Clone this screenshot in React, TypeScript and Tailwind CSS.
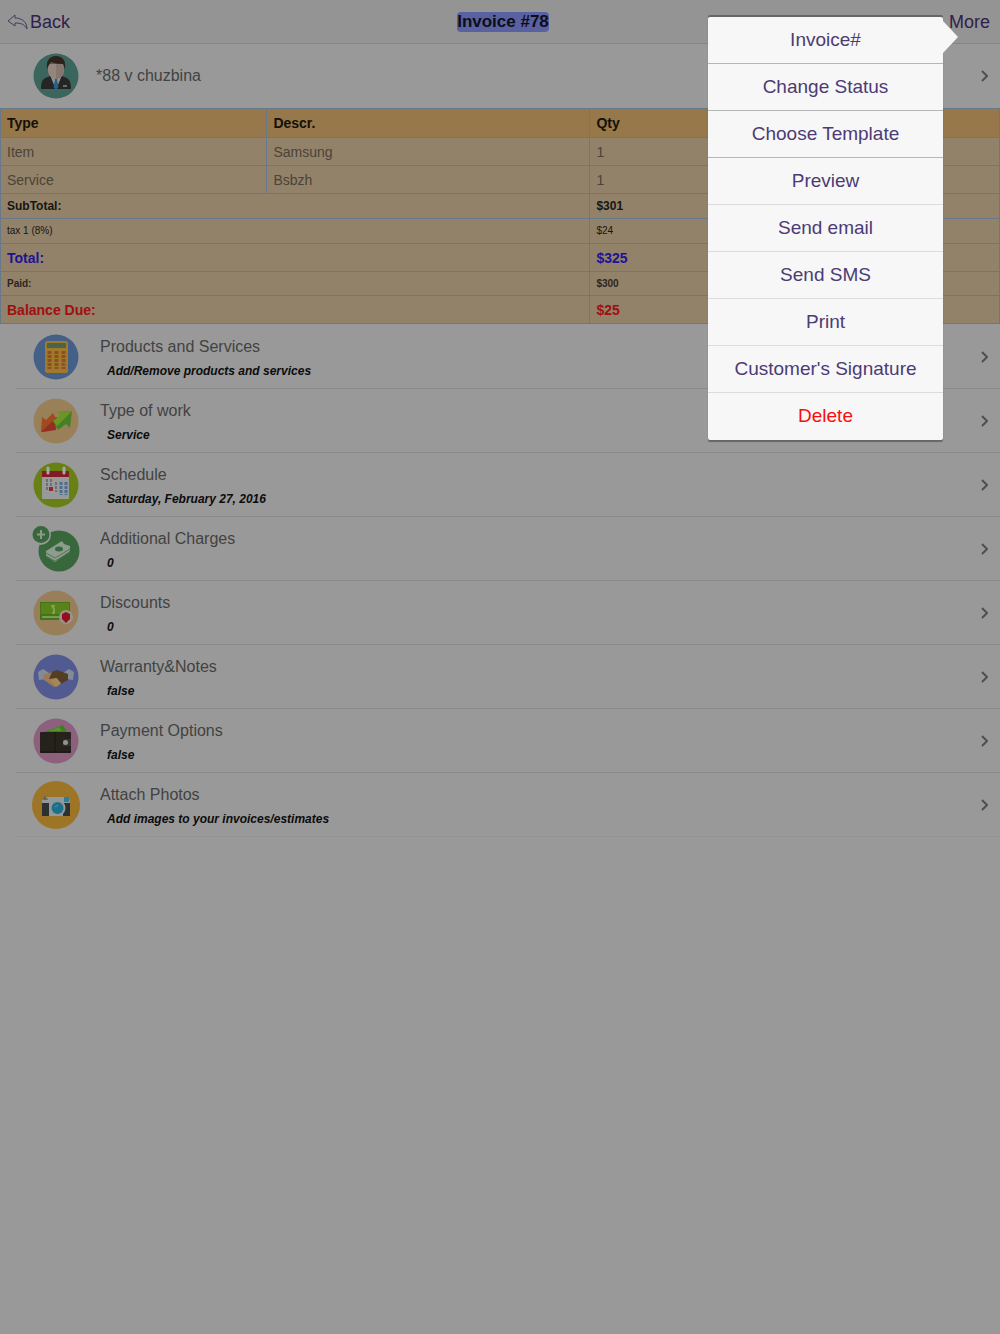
import * as React from "react";
import { useState } from "react";

type Section = {
  title: string;
  detail: string;
  icon: React.ReactNode;
};

const Disc = ({ fill, r = 22.5 }: { fill: string; r?: number }) => (
  <circle cx="24" cy="24" r={r} fill={fill} />
);

function Icon({ children }: { children: React.ReactNode }) {
  return (
    <svg className="h-12 w-12 shrink-0" viewBox="0 0 48 48" aria-hidden="true">
      {children}
    </svg>
  );
}

function CustomerIcon() {
  return (
    <Icon>
      <Disc fill="#3b665d" />
      <path d="M9 37c0-8 2-11 7-12l4-2h8l4 2c5 1 7 4 7 12z" fill="#252526" />
      <path d="M18 23l6 15 6-15z" fill="#8f9295" />
      <path d="M22.5 25h3l-.5 3 1.5 7-2.5 3-2.5-3 1.5-7z" fill="#23608a" />
      <path d="M16 12h16v7c0 4-4 8-8 8s-8-4-8-8z" fill="#94857d" />
      <path d="M24 12h8v7c0 4-4 8-8 8z" fill="#85766f" />
      <path d="M15 17c-1-8 2-13 9-13s10 5 9 13l-2-5c-5 0-9-1-12-2l-2 3z" fill="#2d2219" />
      <path d="M31 34h4" stroke="#858585" strokeWidth="1.5" />
    </Icon>
  );
}

function ProductsIcon() {
  return (
    <Icon>
      <Disc fill="#456086" />
      <rect x="13" y="8" width="23" height="32" rx="2" fill="#a07a2b" />
      <rect x="15" y="10" width="19" height="5" fill="#4c6349" />
      <path d="M17.5 18v18M24.5 18v18M31.5 18v18" stroke="#8f4d25" strokeWidth="4" strokeDasharray="3 1" />
      <path d="M30 28l4 5" stroke="#a05568" strokeWidth="1.5" />
    </Icon>
  );
}

function WorkIcon() {
  return (
    <Icon>
      <Disc fill="#9a8059" />
      <path d="M9 35l1-15 4 3 7-7 2 4 2 0-1 13-3-3-3 4z" fill="#a04a20" />
      <path d="M9 35l13-12 2 10-15 2z" fill="#922f20" />
      <path d="M40 14l-2 17-4-4-8 6-5-9 8-6-4-3z" fill="#458026" />
      <path d="M40 14L25 29l-4-5 8-6-4-3z" fill="#6b9626" />
    </Icon>
  );
}

function ScheduleIcon() {
  return (
    <Icon>
      <Disc fill="#688014" />
      <rect x="10" y="10" width="27" height="28" rx="1" fill="#989a99" />
      <path d="M10 10h27v6H10z" fill="#831b25" />
      <path d="M16 7v5M32 7v5" stroke="#a8a8a8" strokeWidth="3" strokeLinecap="round" />
      <path d="M15 18v12M19 18v8M24 21v10" stroke="#6e7073" strokeWidth="2" strokeDasharray="3 1" />
      <path d="M29 21v13M34 21v13" stroke="#4d6d91" strokeWidth="3" strokeDasharray="3 1" />
      <path d="M17 26h4v4h-4z" fill="#8c2632" />
    </Icon>
  );
}

function ChargesIcon() {
  return (
    <Icon>
      <circle cx="27" cy="26" r="20.5" fill="#38673b" />
      <circle cx="8.5" cy="9.5" r="10.5" fill="#999999" />
      <circle cx="9" cy="9.5" r="8.5" fill="#38673b" />
      <path d="M9 5v9M5 9.500h8" stroke="#8c9a8b" strokeWidth="2" />
      <path d="M14 26l16-10 2 3 6 2v5L23 37l-9-6z" fill="#8d9c8d" />
      <path d="M14 28l9 5 15-9M14 31l9 5 15-9" stroke="#557555" strokeWidth="1" fill="none" />
      <ellipse cx="27" cy="24" rx="4" ry="2.5" fill="#38673b" />
    </Icon>
  );
}

function DiscountsIcon() {
  return (
    <Icon>
      <Disc fill="#987f59" />
      <rect x="8" y="13" width="30" height="18" fill="#44731b" />
      <rect x="9" y="14" width="28" height="11" fill="#588417" />
      <path d="M23 17h-3l2 3v4h-2M10 28h25" stroke="#8da865" strokeWidth="1.5" fill="none" />
      <circle cx="34" cy="28" r="7" fill="#9a9189" />
      <path d="M30 25l4-2 4 2v5l-4 4-4-4z" fill="#92101e" />
    </Icon>
  );
}

function WarrantyIcon() {
  return (
    <Icon>
      <Disc fill="#525b91" />
      <path d="M6 19l5-3 6 4-3 6-7 1zM42 19l-5-3-6 4 3 6 7 1z" fill="#858b96" />
      <path d="M11 22l10-3 11 9-6 5-4 1-10-7z" fill="#9a7b55" />
      <path d="M20 19l5-2 11 4 0 6-7 4-4-6-8 1z" fill="#543d25" />
      <path d="M18 27l6-2 5 5-5 4z" fill="#a58559" />
    </Icon>
  );
}

function PaymentIcon() {
  return (
    <Icon>
      <Disc fill="#8d607d" />
      <path d="M12 15l19-7 4 7z" fill="#437d20" />
      <path d="M16 14l11-4 3 4z" fill="#55952b" />
      <rect x="8" y="15" width="31" height="21" rx="1" fill="#25221b" />
      <path d="M23 15v21M8 35h31" stroke="#17150f" strokeWidth="1" />
      <path d="M31 22h8v7h-8z" fill="#34312b" />
      <circle cx="33.5" cy="25.5" r="2.5" fill="#929292" />
    </Icon>
  );
}

function PhotosIcon() {
  return (
    <Icon>
      <Disc fill="#9d7526" r={24} />
      <path d="M10 19l5-3h18l5 3v16H10z" fill="#92989b" />
      <path d="M10 22h7v13h-7zM31 22h7v13h-7z" fill="#2d3033" />
      <rect x="32" y="16" width="5" height="5" fill="#268199" />
      <path d="M13 15v4M11 18h5" stroke="#505355" />
      <circle cx="25.5" cy="27" r="8" fill="#92989b" />
      <circle cx="25.5" cy="27" r="6" fill="#1c7189" />
      <path d="M23 26l3-2" stroke="#5599a6" />
    </Icon>
  );
}

function Chevron() {
  return (
    <svg className="h-3 w-2 shrink-0" viewBox="0 0 8 12" fill="none" stroke="#505050" strokeWidth="2" aria-hidden="true">
      <path d="M2 1l5 5-5 5" />
    </svg>
  );
}

const sections: Section[] = [
  { title: "Products and Services", detail: "Add/Remove products and services", icon: <ProductsIcon /> },
  { title: "Type of work", detail: "Service", icon: <WorkIcon /> },
  { title: "Schedule", detail: "Saturday, February 27, 2016", icon: <ScheduleIcon /> },
  { title: "Additional Charges", detail: "0", icon: <ChargesIcon /> },
  { title: "Discounts", detail: "0", icon: <DiscountsIcon /> },
  { title: "Warranty&Notes", detail: "false", icon: <WarrantyIcon /> },
  { title: "Payment Options", detail: "false", icon: <PaymentIcon /> },
  { title: "Attach Photos", detail: "Add images to your invoices/estimates", icon: <PhotosIcon /> },
];

const items = [
  { type: "Item", descr: "Samsung", qty: 1 },
  { type: "Service", descr: "Bsbzh", qty: 1 },
];

const totals = [
  { label: "SubTotal:", value: "$301", className: "h-[25px] text-xs font-bold text-[#171512]" },
  { label: "tax 1 (8%)", value: "$24", className: "h-[25px] text-[10px] text-[#171512]" },
  { label: "Total:", value: "$325", className: "h-[28px] text-sm font-bold text-[#1c1494]" },
  { label: "Paid:", value: "$300", className: "h-[24px] text-[10px] font-bold text-[#2a261f]" },
  { label: "Balance Due:", value: "$25", className: "h-[28px] text-sm font-bold text-[#a00f10]" },
];

const actions = [
  "Invoice#",
  "Change Status",
  "Choose Template",
  "Preview",
  "Send email",
  "Send SMS",
  "Print",
  "Customer's Signature",
  "Delete",
];

function ActionMenu() {
  return (
    <div className="absolute top-[17px] right-[57px] w-[235px] rounded-xs bg-[#f7f7f7] shadow-[0_-2px_0_#666666,0_2px_1px_#666666]">
      <svg className="absolute top-1 left-full h-8 w-[15px]" viewBox="0 0 15 32" aria-hidden="true">
        <path d="M0 0l15 16L0 32z" fill="#f7f7f7" />
      </svg>
      {actions.map((action, index) => (
        <button
          key={action}
          type="button"
          className={`block h-[47px] w-full text-center text-[19px] ${
            action === "Delete" ? "text-[#fb0d0d]" : "text-[#4c3b75]"
          } ${
            index === actions.length - 1 ? "" : index < 3 ? "border-b border-[#b5b5b5]" : "border-b border-[#dcdcdc]"
          }`}
        >
          {action}
        </button>
      ))}
    </div>
  );
}

function App() {
  const [menuOpen, setMenuOpen] = useState(true);

  return (
    <div className="relative min-h-screen bg-[#999999] font-['Liberation_Sans',Arial,sans-serif]">
      <header className="grid h-11 grid-cols-[1fr_auto_1fr] items-center border-b border-[#858585] bg-[#949494] pr-2.5 pl-2 text-lg leading-6 text-[#30204d]">
        <a href="#back" className="flex items-center gap-0.5">
          <svg className="h-4 w-5" viewBox="0 0 20 16" fill="none" stroke="#463b5c" strokeWidth="1" aria-hidden="true">
            <path d="M7 1L0 7l7 5V9c6 0 9 1 12 6 0-6-4-11-12-11z" />
          </svg>
          Back
        </a>
        <h1 className="ml-2 rounded-sm bg-[#5961a0] text-[17px] leading-5 font-bold text-[#0d0d19]">Invoice #78</h1>
        <button type="button" className="justify-self-end" onClick={() => setMenuOpen(!menuOpen)}>
          More
        </button>
      </header>

      {/* Customer */}
      <a href="#customer" className="flex h-16 items-center gap-4 pr-3 pl-8 text-[#424242]">
        <CustomerIcon />
        <span className="grow">*88 v chuzbina</span>
        <Chevron />
      </a>

      {/* Invoice lines */}
      <table className="w-full table-fixed border-collapse border border-[#66788a] bg-[#928269] text-left text-sm text-[#4b4338] [&_td]:border-y [&_td]:border-[#66788a] [&_td]:px-1.5 [&_td]:py-0 [&_td]:leading-5 [&_th]:border-[#66788a] [&_th]:px-1.5 [&_th]:py-0">
        <colgroup>
          <col className="w-4/15" />
          <col />
          <col className="w-[41%]" />
        </colgroup>
        <thead>
          <tr className="h-[29px] bg-[#96784a] text-[#151007]">
            <th>Type</th>
            <th className="border-x">Descr.</th>
            <th>Qty</th>
          </tr>
        </thead>
        <tbody>
          {items.map((item) => (
            <tr key={item.type} className="h-[28px]">
              <td>{item.type}</td>
              <td className="border-x">{item.descr}</td>
              <td>{item.qty}</td>
            </tr>
          ))}
          {totals.map((row) => (
            <tr key={row.label} className={row.className}>
              <td colSpan={2} className="border-r">
                {row.label}
              </td>
              <td>{row.value}</td>
            </tr>
          ))}
        </tbody>
      </table>

      {/* Invoice sections */}
      <ul className="pt-px pl-4">
        {sections.map((section) => (
          <li key={section.title} className="h-16 border-b border-[#8a8a8a] last:border-[#949494]">
            <a href="#section" className="flex h-full items-center gap-5 pr-3 pl-4">
              {section.icon}
              <div className="grow pt-1">
                <h2 className="leading-6 text-[#424242]">{section.title}</h2>
                <p className="pl-[7px] text-xs leading-6 font-bold text-[#0c0c0c] italic">{section.detail}</p>
              </div>
              <Chevron />
            </a>
          </li>
        ))}
      </ul>

      {menuOpen && <ActionMenu />}
    </div>
  );
}

export default App;
